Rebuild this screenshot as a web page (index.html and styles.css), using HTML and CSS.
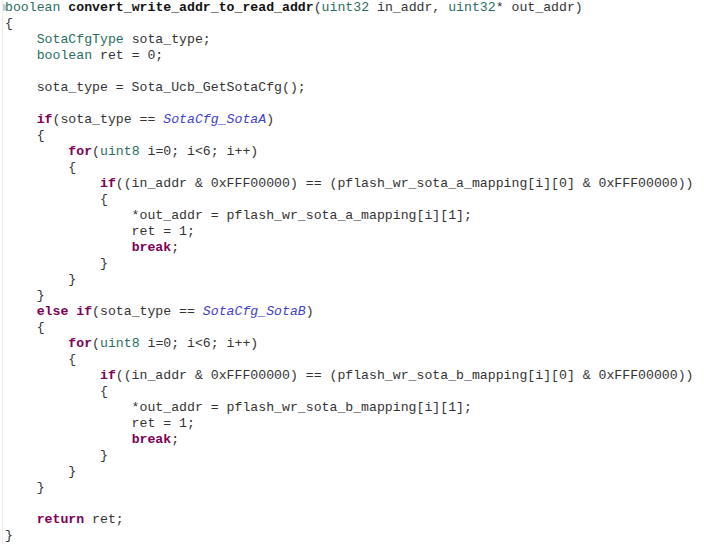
FILE: index.html
```html
<!DOCTYPE html>
<html>
<head>
<meta charset="utf-8">
<link rel="stylesheet" href="styles.css">
</head>
<body>
<div class="editor">
<span class="fold-marker"></span>
<pre class="code"><span class="ty">boolean</span> <span class="fn">convert_write_addr_to_read_addr</span>(<span class="ty">uint32</span> in_addr, <span class="ty">uint32</span>* out_addr)
{
    <span class="ty">SotaCfgType</span> sota_type;
    <span class="ty">boolean</span> ret = 0;

    sota_type = Sota_Ucb_GetSotaCfg();

    <span class="kw">if</span>(sota_type == <span class="en">SotaCfg_SotaA</span>)
    {
        <span class="kw">for</span>(<span class="ty">uint8</span> i=0; i&lt;6; i++)
        {
            <span class="kw">if</span>((in_addr &amp; 0xFFF00000) == (pflash_wr_sota_a_mapping[i][0] &amp; 0xFFF00000))
            {
                *out_addr = pflash_wr_sota_a_mapping[i][1];
                ret = 1;
                <span class="kw">break</span>;
            }
        }
    }
    <span class="kw">else</span> <span class="kw">if</span>(sota_type == <span class="en">SotaCfg_SotaB</span>)
    {
        <span class="kw">for</span>(<span class="ty">uint8</span> i=0; i&lt;6; i++)
        {
            <span class="kw">if</span>((in_addr &amp; 0xFFF00000) == (pflash_wr_sota_b_mapping[i][0] &amp; 0xFFF00000))
            {
                *out_addr = pflash_wr_sota_b_mapping[i][1];
                ret = 1;
                <span class="kw">break</span>;
            }
        }
    }

    <span class="kw">return</span> ret;
}</pre>
</div>
</body>
</html>
```

FILE: styles.css
```css
html, body {
  margin: 0;
  padding: 0;
  background: #ffffff;
}

.editor {
  position: relative;
  width: 704px;
  height: 544px;
  overflow: hidden;
  border-left: 1px solid #ececec;
  margin-left: 2px;
  box-sizing: border-box;
}

.fold-marker {
  position: absolute;
  left: -2px;
  top: 4px;
  width: 5px;
  height: 7px;
  border-radius: 3px;
  background: #c8c8c8;
}

.code {
  margin: 0;
  padding: 0 0 0 2px;
  font-family: "Liberation Mono", "Courier New", monospace;
  font-size: 13.2px;
  line-height: 16px;
  color: #333333;
  white-space: pre;
}

.kw {
  color: #7f0055;
  font-weight: bold;
}

.ty {
  color: #2a6e62;
}

.fn {
  color: #111111;
  font-weight: bold;
}

.en {
  color: #4040cc;
  font-style: italic;
}
```
